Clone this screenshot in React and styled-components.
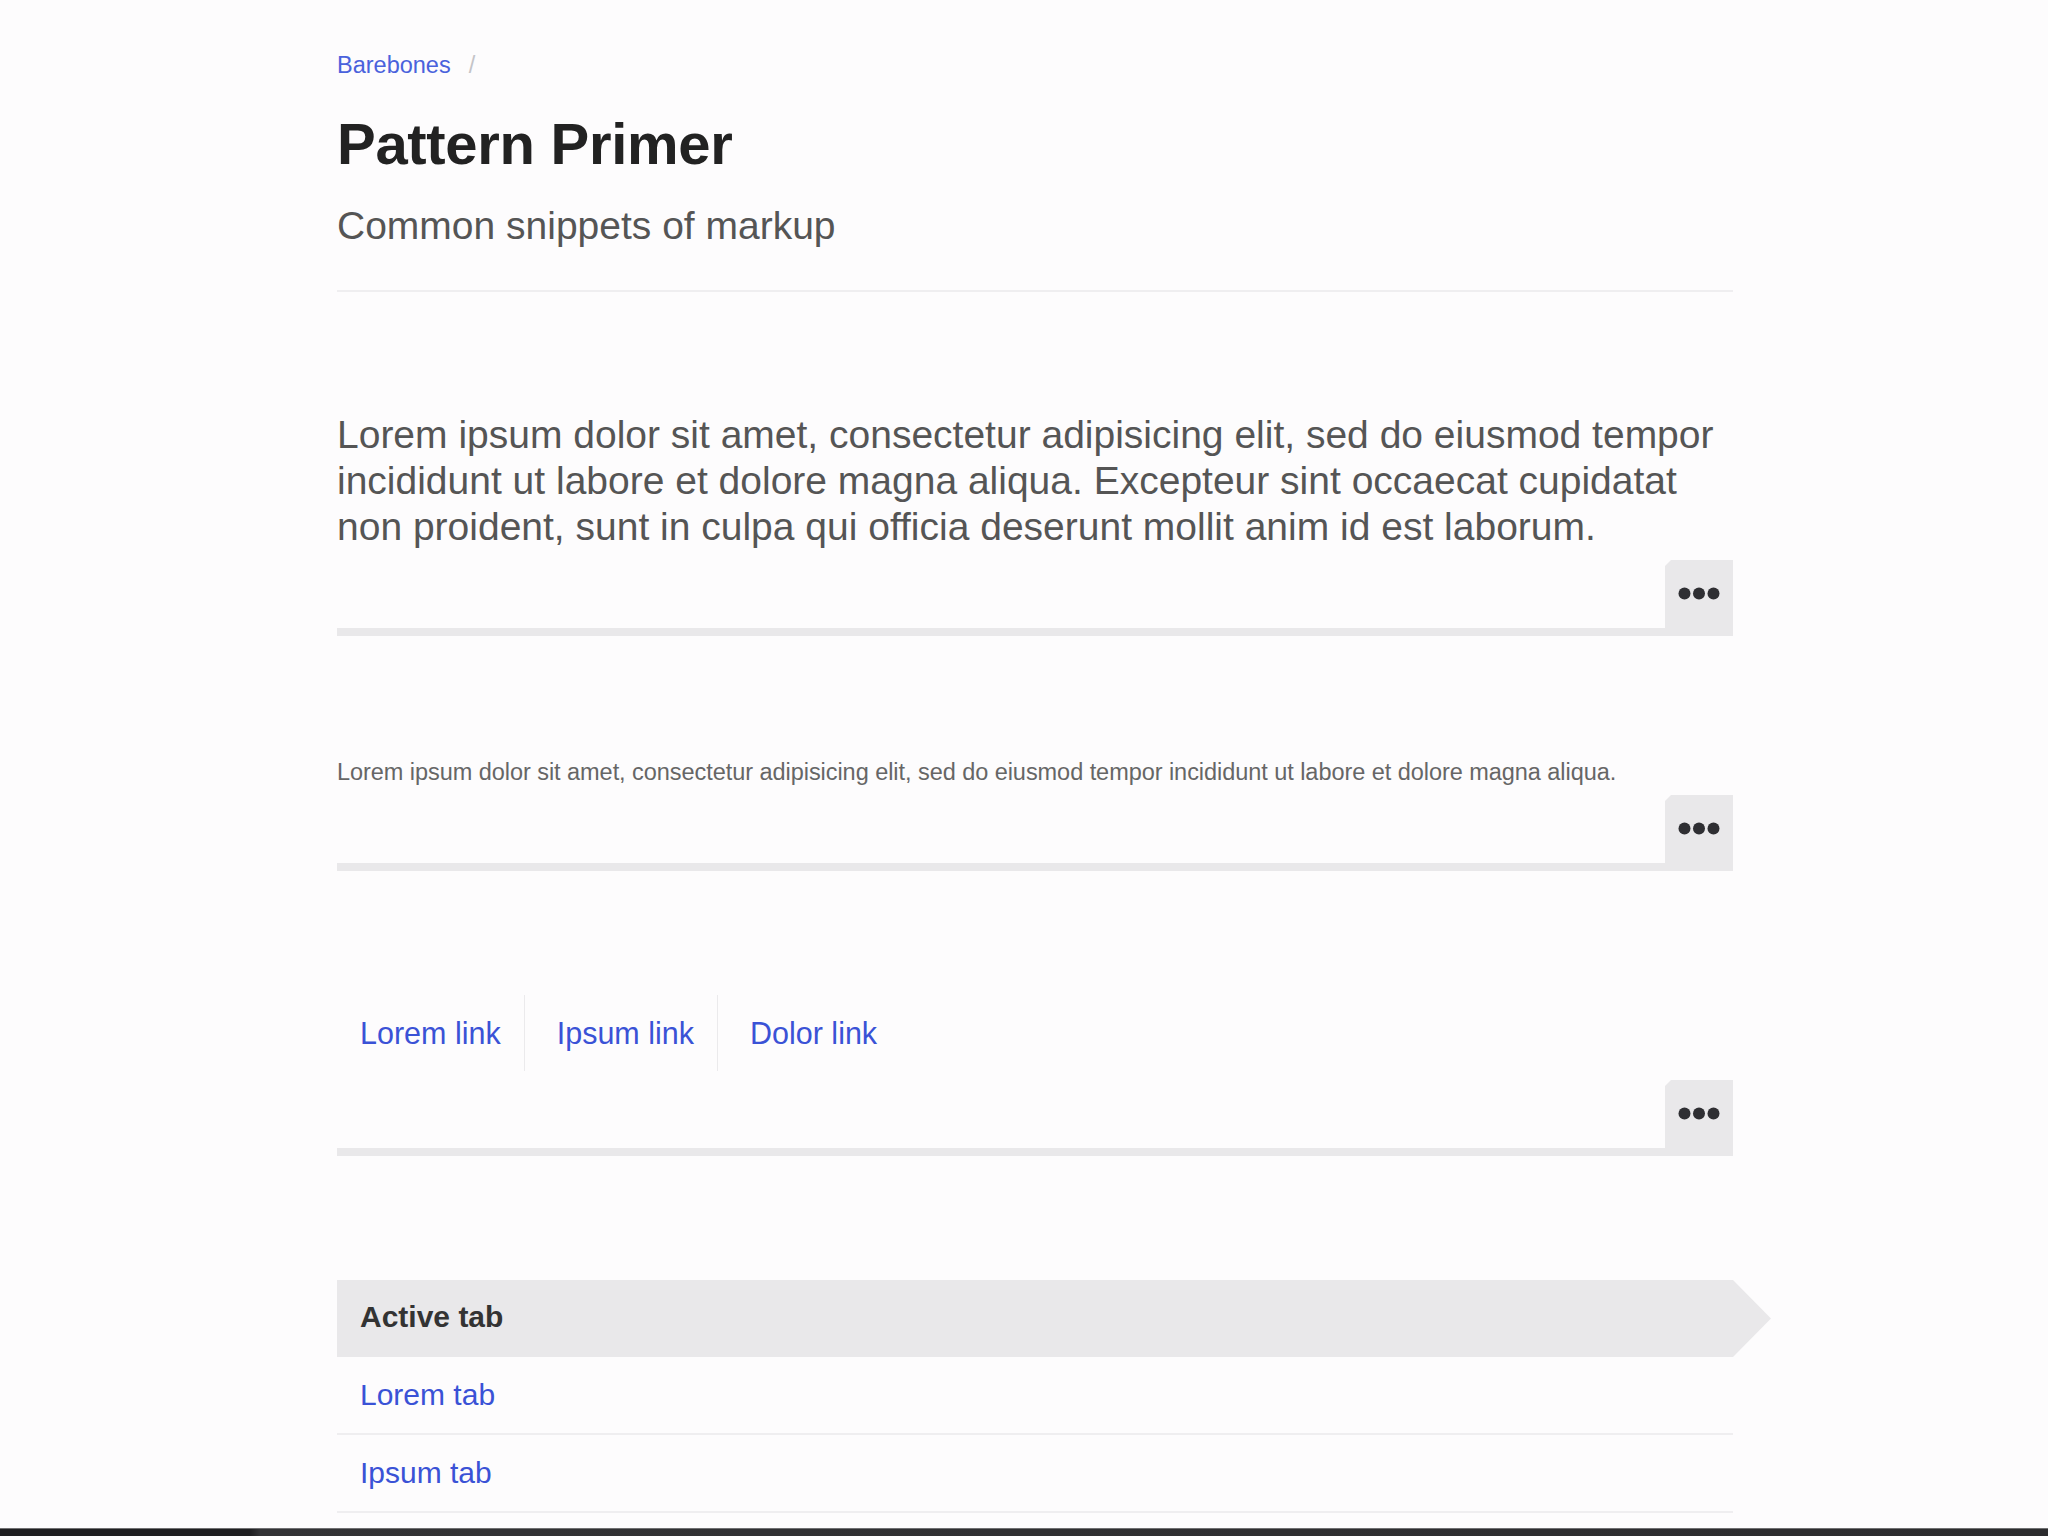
import React from "react";
import styled, { createGlobalStyle } from "styled-components";

const GlobalStyle = createGlobalStyle`
  html, body {
    margin: 0;
    padding: 0;
    background: #fdfcfd;
  }
  body {
    font-family: "Liberation Sans", Arial, Helvetica, sans-serif;
    color: #555;
  }
  * { box-sizing: border-box; }
`;

const Page = styled.div`
  min-height: 100vh;
  display: flex;
  flex-direction: column;
`;

const Main = styled.main`
  flex: 1;
  width: 1396px;
  margin-left: 337px;
  padding-top: 50px;
`;

const Header = styled.header`
  padding-bottom: 41px;
  border-bottom: 2px solid #efeef0;
`;

const Breadcrumb = styled.nav`
  display: flex;
  align-items: center;
  gap: 18px;
  font-size: 23.5px;
  line-height: 30px;
`;

const CrumbLink = styled.a`
  color: #4a62dc;
  text-decoration: none;
`;

const CrumbSep = styled.span`
  color: #c4c4c8;
`;

const Title = styled.h1`
  margin: 29px 0 0;
  font-size: 58px;
  line-height: 70px;
  font-weight: 700;
  color: #222;
  letter-spacing: -0.3px;
`;

const Subtitle = styled.p`
  margin: 24px 0 0;
  font-size: 39px;
  line-height: 46px;
  color: #555;
`;

const Section = styled.section`
  padding-top: ${(p) => p.$top}px;
`;

const Lead = styled.p`
  margin: 0;
  font-size: 39px;
  line-height: 46px;
  color: #555;
`;

const Small = styled.p`
  margin: 0;
  font-size: 23.5px;
  line-height: 30px;
  color: #666;
  letter-spacing: -0.05px;
`;

const Toolbar = styled.div`
  display: flex;
  align-items: flex-end;
  height: 76px;
  margin-top: ${(p) => p.$gap}px;
`;

const Rule = styled.div`
  flex: 1;
  height: 8px;
  background: #e9e8ea;
`;

const MoreButton = styled.button`
  width: 68px;
  height: 76px;
  border: 0;
  padding: 0 0 10px;
  margin: 0;
  background: #e9e8ea;
  display: flex;
  align-items: center;
  justify-content: center;
  clip-path: polygon(6px 0, 100% 0, 100% 100%, 0 100%, 0 6px);
  cursor: pointer;
`;

const LinkList = styled.ul`
  display: flex;
  gap: 9px;
  list-style: none;
  margin: 0;
  padding: 0;
`;

const LinkItem = styled.li`
  height: 76px;
  display: flex;
  align-items: center;
  padding: 0 23px;
  border-right: ${(p) => (p.$last ? "none" : "1px solid #ebeaec")};
`;

const NavLink = styled.a`
  font-size: 30.5px;
  color: #3a52d6;
  text-decoration: none;
`;

const TabList = styled.ul`
  list-style: none;
  margin: 0;
  padding: 0;
`;

const Tab = styled.li`
  height: ${(p) => (p.$active ? "77px" : "78px")};
  display: flex;
  align-items: center;
  padding-left: 23px;
  font-size: 30px;
  background: ${(p) => (p.$active ? "#e9e8ea" : "transparent")};
  border-bottom: ${(p) => (p.$active ? "none" : "2px solid #efeef0")};
  margin-right: ${(p) => (p.$active ? "-38px" : "0")};
  clip-path: ${(p) =>
    p.$active
      ? "polygon(0 0, calc(100% - 38px) 0, 100% 50%, calc(100% - 38px) 100%, 0 100%)"
      : "none"};
`;

const ActiveLabel = styled.strong`
  color: #333;
  font-weight: 700;
  margin-top: -3px;
`;

const TabLink = styled.a`
  color: #3a52d6;
  text-decoration: none;
`;

const Footer = styled.div`
  height: 8px;
  border-top: 1px solid #707072;
  background: linear-gradient(90deg, #1f1f21 0, #1f1f21 250px, #333335 260px, #2c2c2e 100%);
`;

function Dots() {
  return (
    <svg width="42" height="13" viewBox="0 0 42 13" aria-hidden="true">
      <circle cx="6.5" cy="6.5" r="6" fill="#2f2f33" />
      <circle cx="21" cy="6.5" r="6" fill="#2f2f33" />
      <circle cx="35.5" cy="6.5" r="6" fill="#2f2f33" />
    </svg>
  );
}

function SnippetTools({ gap }) {
  return (
    <Toolbar $gap={gap}>
      <Rule />
      <MoreButton aria-label="Show markup">
        <Dots />
      </MoreButton>
    </Toolbar>
  );
}

export default function App() {
  return (
    <Page>
      <GlobalStyle />
      <Main>
        <Header>
          <Breadcrumb>
            <CrumbLink href="#">Barebones</CrumbLink>
            <CrumbSep>/</CrumbSep>
          </Breadcrumb>
          <Title>Pattern Primer</Title>
          <Subtitle>Common snippets of markup</Subtitle>
        </Header>

        <Section $top={120}>
          <Lead>
            Lorem ipsum dolor sit amet, consectetur adipisicing elit, sed do eiusmod tempor
            incididunt ut labore et dolore magna aliqua. Excepteur sint occaecat cupidatat
            non proident, sunt in culpa qui officia deserunt mollit anim id est laborum.
          </Lead>
          <SnippetTools gap={10} />
        </Section>

        <Section $top={121}>
          <Small>
            Lorem ipsum dolor sit amet, consectetur adipisicing elit, sed do eiusmod tempor
            incididunt ut labore et dolore magna aliqua.
          </Small>
          <SnippetTools gap={8} />
        </Section>

        <Section $top={124}>
          <LinkList>
            <LinkItem>
              <NavLink href="#">Lorem link</NavLink>
            </LinkItem>
            <LinkItem>
              <NavLink href="#">Ipsum link</NavLink>
            </LinkItem>
            <LinkItem $last>
              <NavLink href="#">Dolor link</NavLink>
            </LinkItem>
          </LinkList>
          <SnippetTools gap={9} />
        </Section>

        <Section $top={124}>
          <TabList>
            <Tab $active>
              <ActiveLabel>Active tab</ActiveLabel>
            </Tab>
            <Tab>
              <TabLink href="#">Lorem tab</TabLink>
            </Tab>
            <Tab>
              <TabLink href="#">Ipsum tab</TabLink>
            </Tab>
          </TabList>
        </Section>
      </Main>
      <Footer />
    </Page>
  );
}
